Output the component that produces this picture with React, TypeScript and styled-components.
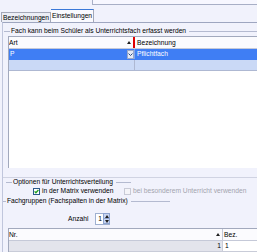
import React from 'react';
import styled, { createGlobalStyle } from 'styled-components';

const FONT = `"Liberation Sans", Arial, sans-serif`;

const GlobalStyle = createGlobalStyle`
  html, body { margin: 0; padding: 0; background: #f1f2fc; }
  #root { width: 257px; height: 252px; }
`;

const Screen = styled.div`
  width: 257px;
  height: 252px;
  overflow: hidden;
  display: flex;
  flex-direction: column;
  background: #f1f2fc;
  font-family: ${FONT};
  font-size: 6.7px;
  line-height: 8px;
  color: #000;
`;

const TopStrip = styled.div`
  height: 9px;
  flex: none;
  display: flex;
`;

const TopField = styled.div`
  margin-left: 92px;
  flex: 1;
  height: 5px;
  box-sizing: border-box;
  border-left: 1px solid #a8afc6;
  border-bottom: 1px solid #a8afc6;
  background: #f7f7ff;
`;

const TabRow = styled.div`
  height: 13px;
  flex: none;
  display: flex;
  align-items: flex-end;
  padding-left: 1px;
`;

const Tab = styled.div<{ $active?: boolean; $w: number }>`
  width: ${(p) => p.$w}px;
  height: ${(p) => (p.$active ? 13 : 10)}px;
  box-sizing: border-box;
  border-right: 1px solid #a4a8b8;
  border-left: ${(p) => (p.$active ? 'none' : '1px solid #a4a8b8')};
  border-top: 1px solid ${(p) => (p.$active ? '#3a78d8' : '#a4a8b8')};
  background: ${(p) => (p.$active ? '#fafaff' : '#eceef6')};
  display: flex;
  align-items: center;
  justify-content: center;
  white-space: nowrap;
  padding-top: ${(p) => (p.$active ? 0 : 1)}px;
`;

const Panel = styled.div`
  flex: 1;
  margin-left: 2px;
  border-top: 1px solid #9ea6c0;
  border-left: 1px solid #c0c6dc;
  display: flex;
  flex-direction: column;
  background: #f1f2fc;
`;

const FachGroup = styled.div`
  padding-top: 4px;
  padding-bottom: 9px;
  border-bottom: 1px solid #d0d3e2;
  display: flex;
  flex-direction: column;
`;

const Legend = styled.div<{ $dash: number; $indent: number; $width?: number; $mt?: number }>`
  display: flex;
  align-items: center;
  height: 8px;
  white-space: nowrap;
  margin-top: ${(p) => p.$mt ?? 0}px;
  padding-left: ${(p) => p.$indent}px;
  width: ${(p) => (p.$width ? `${p.$width}px` : 'auto')};
  &::before {
    content: '';
    width: ${(p) => p.$dash}px;
    height: 1px;
    background: #b4bad0;
    margin-right: 1px;
    flex: none;
  }
  &::after {
    content: '';
    flex: 1;
    height: 1px;
    background: #b4bad0;
    margin-left: 3px;
  }
`;

const Table = styled.div<{ $h?: number; $mt?: number }>`
  margin-left: 5px;
  margin-top: ${(p) => p.$mt ?? 1}px;
  ${(p) => (p.$h ? `height: ${p.$h}px; flex: none;` : 'flex: 1;')}
  box-sizing: border-box;
  border-top: 1px solid #a2a9bd;
  border-left: 1px solid #a2a9bd;
  background: #fff;
  display: flex;
  flex-direction: column;
`;

const GridRow = styled.div<{ $cols: string; $h: number; $bg: string; $line: string }>`
  display: grid;
  grid-template-columns: ${(p) => p.$cols};
  height: ${(p) => p.$h}px;
  flex: none;
  box-sizing: border-box;
  background: ${(p) => p.$bg};
  border-bottom: 1px solid ${(p) => p.$line};
`;

const HeadCell = styled.div<{ $bar?: string; $pl?: number }>`
  display: flex;
  align-items: center;
  justify-content: space-between;
  padding-left: ${(p) => p.$pl ?? 0}px;
  border-right: ${(p) => p.$bar ?? 'none'};
  overflow: hidden;
  white-space: nowrap;
`;

const Cell = styled.div<{ $color?: string; $pl?: number; $right?: boolean; $bg?: string; $divider?: string }>`
  display: flex;
  align-items: center;
  justify-content: ${(p) => (p.$right ? 'flex-end' : 'space-between')};
  padding-left: ${(p) => p.$pl ?? 0}px;
  color: ${(p) => p.$color ?? '#000'};
  background: ${(p) => p.$bg ?? 'transparent'};
  border-right: ${(p) => p.$divider ?? 'none'};
  white-space: nowrap;
  overflow: hidden;
`;

const SortArrow = styled.svg<{ $mr: number }>`
  width: 4px;
  height: 3px;
  margin-right: ${(p) => p.$mr}px;
  flex: none;
`;

const DropButton = styled.div`
  width: 7px;
  height: 9px;
  box-sizing: border-box;
  border: 1px solid #9aa8c8;
  background: #e3e9f6;
  display: flex;
  align-items: center;
  justify-content: center;
  flex: none;
`;

const OptionsGroup = styled.div`
  display: flex;
  flex-direction: column;
`;

const CheckRow = styled.div`
  display: flex;
  align-items: center;
  height: 8px;
  margin-top: 1px;
  padding-left: 30px;
`;

const CheckItem = styled.label<{ $w?: number; $disabled?: boolean }>`
  display: flex;
  align-items: center;
  gap: 2px;
  white-space: nowrap;
  width: ${(p) => (p.$w ? `${p.$w}px` : 'auto')};
  color: ${(p) => (p.$disabled ? '#a3a4ae' : '#000')};
`;

const Box = styled.span<{ $disabled?: boolean }>`
  width: 7px;
  height: 7px;
  box-sizing: border-box;
  border: 1px solid ${(p) => (p.$disabled ? '#c8cad6' : '#2c5a8c')};
  background: ${(p) => (p.$disabled ? '#f4f4f8' : '#fff')};
  display: flex;
  align-items: center;
  justify-content: center;
  flex: none;
`;

const FachgruppenGroup = styled.div`
  flex: 1;
  display: flex;
  flex-direction: column;
  min-height: 0;
`;

const CountRow = styled.div`
  display: flex;
  align-items: center;
  height: 12px;
  margin-top: 8px;
  padding-left: 65px;
  flex: none;
`;

const CountLabel = styled.span`
  width: 27px;
`;

const Spin = styled.div`
  width: 15px;
  height: 12px;
  box-sizing: border-box;
  border: 1px solid #9fb0d0;
  background: #fff;
  display: flex;
`;

const SpinValue = styled.span`
  flex: 1;
  text-align: right;
  padding-right: 1px;
  line-height: 10px;
`;

const SpinButtons = styled.div`
  width: 6px;
  display: flex;
  flex-direction: column;
`;

const SpinBtn = styled.div`
  flex: 1;
  background: #c9d6f2;
  border: 1px solid #8ea4d0;
  margin: -1px -1px 0 0;
  display: flex;
  align-items: center;
  justify-content: center;
`;

const Arrow = ({ down = false, mr = 0 }: { down?: boolean; mr?: number }) => (
  <SortArrow $mr={mr} viewBox="0 0 4 3">
    <polygon points={down ? '0,0 4,0 2,3' : '0,3 4,3 2,0'} fill="#202020" />
  </SortArrow>
);

const GRID1 = '126px 1fr';
const GRID2 = '214px 1fr';

export default function App() {
  return (
    <>
      <GlobalStyle />
      <Screen>
        <TopStrip>
          <TopField />
        </TopStrip>
        <TabRow>
          <Tab $w={50}>Bezeichnungen</Tab>
          <Tab $w={43} $active>
            Einstellungen
          </Tab>
        </TabRow>
        <Panel>
          <FachGroup>
            <Legend $dash={6} $indent={1}>
              Fach kann beim Schüler als Unterrichtsfach erfasst werden
            </Legend>
            <Table $h={132}>
              <GridRow $cols={GRID1} $h={12} $bg="#fbfbfe" $line="#c5c9d8">
                <HeadCell $bar="2px solid #e00000">
                  Art
                  <Arrow mr={2} />
                </HeadCell>
                <HeadCell $pl={2}>Bezeichnung</HeadCell>
              </GridRow>
              <GridRow $cols={GRID1} $h={11} $bg="#3f7ef4" $line="#3f7ef4">
                <Cell $color="#fff" $pl={1} $divider="1px solid #7ea6ee">
                  P
                  <DropButton>
                    <svg width="5" height="3" viewBox="0 0 5 3">
                      <polyline points="0.5,0.5 2.5,2.5 4.5,0.5" fill="none" stroke="#2a4a80" strokeWidth="1" />
                    </svg>
                  </DropButton>
                </Cell>
                <Cell $color="#fff" $pl={2}>
                  Pflichtfach
                </Cell>
              </GridRow>
              <GridRow $cols={GRID1} $h={11} $bg="#cad9f6" $line="#aeb8d2">
                <Cell $divider="1px solid #aeb8d2" />
                <Cell />
              </GridRow>
            </Table>
          </FachGroup>

          <OptionsGroup>
            <Legend $dash={6} $indent={3} $width={125}>
              Optionen für Unterrichtsverteilung
            </Legend>
            <CheckRow>
              <CheckItem $w={91}>
                <Box>
                  <svg width="5" height="5" viewBox="0 0 5 5">
                    <polyline points="0.6,2.4 1.9,3.8 4.4,1" fill="none" stroke="#21a121" strokeWidth="1.3" />
                  </svg>
                </Box>
                in der Matrix verwenden
              </CheckItem>
              <CheckItem $disabled>
                <Box $disabled />
                bei besonderem Unterricht verwenden
              </CheckItem>
            </CheckRow>
          </OptionsGroup>

          <FachgruppenGroup>
            <Legend $dash={3} $indent={0} $width={167} $mt={2}>
              Fachgruppen (Fachspalten in der Matrix)
            </Legend>
            <CountRow>
              <CountLabel>Anzahl</CountLabel>
              <Spin>
                <SpinValue>1</SpinValue>
                <SpinButtons>
                  <SpinBtn>
                    <Arrow />
                  </SpinBtn>
                  <SpinBtn>
                    <Arrow down />
                  </SpinBtn>
                </SpinButtons>
              </Spin>
            </CountRow>
            <Table $mt={3}>
              <GridRow $cols={GRID2} $h={12} $bg="#fbfbfe" $line="#c5c9d8">
                <HeadCell $bar="1px solid #c5c9d8">
                  Nr.
                  <Arrow mr={2} />
                </HeadCell>
                <HeadCell $pl={1}>Bez.</HeadCell>
              </GridRow>
              <GridRow $cols={GRID2} $h={11} $bg="#e3e4ec" $line="#c9ccd8">
                <Cell $right $divider="1px solid #c9ccd8">
                  <span style={{ paddingRight: 1 }}>1</span>
                </Cell>
                <Cell $pl={2} $bg="#fff">
                  1
                </Cell>
              </GridRow>
            </Table>
          </FachgruppenGroup>
        </Panel>
      </Screen>
    </>
  );
}
